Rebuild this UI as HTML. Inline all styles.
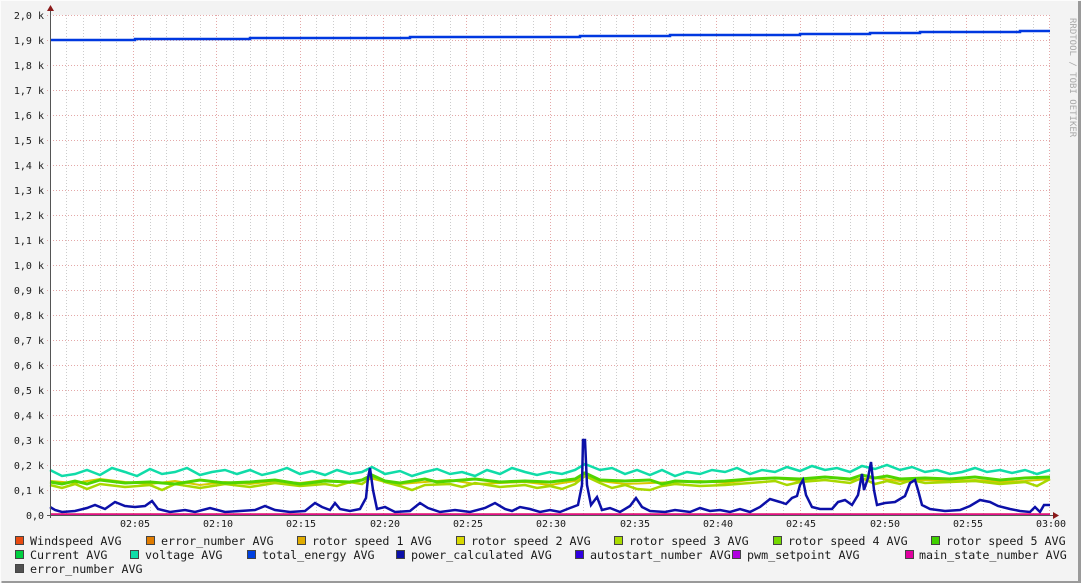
<!DOCTYPE html>
<html><head><meta charset="utf-8"><style>
html,body{margin:0;padding:0;background:#f3f3f3}
svg{display:block}
text{font-family:"DejaVu Sans Mono","Liberation Mono",monospace;fill:#1a1a1a}
.ax{font-size:10px}
.lg{font-size:11.7px}
</style></head><body>
<svg width="1081" height="583" viewBox="0 0 1081 583" xmlns="http://www.w3.org/2000/svg">
<rect x="0" y="0" width="1081" height="583" fill="#f3f3f3"/>
<path d="M0.5 582.5V0.5H1080.5" stroke="#fcfcfc" fill="none"/>
<path d="M1.5 582.5H1079.5V1" stroke="#9a9a9a" stroke-width="3" fill="none"/>
<rect x="50" y="15" width="1000" height="500" fill="#ffffff"/>
<g stroke="#cccccc" stroke-dasharray="1,2">
<line x1="66.5" y1="15" x2="66.5" y2="515"/><line x1="83.5" y1="15" x2="83.5" y2="515"/><line x1="100.5" y1="15" x2="100.5" y2="515"/><line x1="116.5" y1="15" x2="116.5" y2="515"/>
<line x1="150.5" y1="15" x2="150.5" y2="515"/><line x1="166.5" y1="15" x2="166.5" y2="515"/><line x1="183.5" y1="15" x2="183.5" y2="515"/><line x1="200.5" y1="15" x2="200.5" y2="515"/>
<line x1="233.5" y1="15" x2="233.5" y2="515"/><line x1="250.5" y1="15" x2="250.5" y2="515"/><line x1="266.5" y1="15" x2="266.5" y2="515"/><line x1="283.5" y1="15" x2="283.5" y2="515"/>
<line x1="316.5" y1="15" x2="316.5" y2="515"/><line x1="333.5" y1="15" x2="333.5" y2="515"/><line x1="350.5" y1="15" x2="350.5" y2="515"/><line x1="366.5" y1="15" x2="366.5" y2="515"/>
<line x1="400.5" y1="15" x2="400.5" y2="515"/><line x1="416.5" y1="15" x2="416.5" y2="515"/><line x1="433.5" y1="15" x2="433.5" y2="515"/><line x1="450.5" y1="15" x2="450.5" y2="515"/>
<line x1="483.5" y1="15" x2="483.5" y2="515"/><line x1="500.5" y1="15" x2="500.5" y2="515"/><line x1="516.5" y1="15" x2="516.5" y2="515"/><line x1="533.5" y1="15" x2="533.5" y2="515"/>
<line x1="566.5" y1="15" x2="566.5" y2="515"/><line x1="583.5" y1="15" x2="583.5" y2="515"/><line x1="600.5" y1="15" x2="600.5" y2="515"/><line x1="616.5" y1="15" x2="616.5" y2="515"/>
<line x1="650.5" y1="15" x2="650.5" y2="515"/><line x1="666.5" y1="15" x2="666.5" y2="515"/><line x1="683.5" y1="15" x2="683.5" y2="515"/><line x1="700.5" y1="15" x2="700.5" y2="515"/>
<line x1="733.5" y1="15" x2="733.5" y2="515"/><line x1="750.5" y1="15" x2="750.5" y2="515"/><line x1="766.5" y1="15" x2="766.5" y2="515"/><line x1="783.5" y1="15" x2="783.5" y2="515"/>
<line x1="816.5" y1="15" x2="816.5" y2="515"/><line x1="833.5" y1="15" x2="833.5" y2="515"/><line x1="850.5" y1="15" x2="850.5" y2="515"/><line x1="866.5" y1="15" x2="866.5" y2="515"/>
<line x1="900.5" y1="15" x2="900.5" y2="515"/><line x1="916.5" y1="15" x2="916.5" y2="515"/><line x1="933.5" y1="15" x2="933.5" y2="515"/><line x1="950.5" y1="15" x2="950.5" y2="515"/>
<line x1="983.5" y1="15" x2="983.5" y2="515"/><line x1="1000.5" y1="15" x2="1000.5" y2="515"/><line x1="1016.5" y1="15" x2="1016.5" y2="515"/><line x1="1033.5" y1="15" x2="1033.5" y2="515"/>
</g>
<g stroke="#e4a8a8" stroke-dasharray="1,2">
<line x1="133.5" y1="15" x2="133.5" y2="515"/><line x1="216.5" y1="15" x2="216.5" y2="515"/><line x1="300.5" y1="15" x2="300.5" y2="515"/><line x1="383.5" y1="15" x2="383.5" y2="515"/><line x1="466.5" y1="15" x2="466.5" y2="515"/><line x1="550.5" y1="15" x2="550.5" y2="515"/><line x1="633.5" y1="15" x2="633.5" y2="515"/><line x1="716.5" y1="15" x2="716.5" y2="515"/><line x1="800.5" y1="15" x2="800.5" y2="515"/><line x1="883.5" y1="15" x2="883.5" y2="515"/><line x1="966.5" y1="15" x2="966.5" y2="515"/><line x1="1049.5" y1="15" x2="1049.5" y2="515"/>
</g>
<g stroke="#e4a8a8" stroke-dasharray="1,2">
<line x1="47" y1="15.5" x2="1050" y2="15.5"/><line x1="47" y1="40.5" x2="1050" y2="40.5"/><line x1="47" y1="65.5" x2="1050" y2="65.5"/><line x1="47" y1="90.5" x2="1050" y2="90.5"/><line x1="47" y1="115.5" x2="1050" y2="115.5"/><line x1="47" y1="140.5" x2="1050" y2="140.5"/><line x1="47" y1="165.5" x2="1050" y2="165.5"/><line x1="47" y1="190.5" x2="1050" y2="190.5"/><line x1="47" y1="215.5" x2="1050" y2="215.5"/><line x1="47" y1="240.5" x2="1050" y2="240.5"/><line x1="47" y1="265.5" x2="1050" y2="265.5"/><line x1="47" y1="290.5" x2="1050" y2="290.5"/><line x1="47" y1="315.5" x2="1050" y2="315.5"/><line x1="47" y1="340.5" x2="1050" y2="340.5"/><line x1="47" y1="365.5" x2="1050" y2="365.5"/><line x1="47" y1="390.5" x2="1050" y2="390.5"/><line x1="47" y1="415.5" x2="1050" y2="415.5"/><line x1="47" y1="440.5" x2="1050" y2="440.5"/><line x1="47" y1="465.5" x2="1050" y2="465.5"/><line x1="47" y1="490.5" x2="1050" y2="490.5"/>
</g>
<g class="ax" text-anchor="end">
<text x="44" y="19">2,0 k</text><text x="44" y="44">1,9 k</text><text x="44" y="69">1,8 k</text><text x="44" y="94">1,7 k</text><text x="44" y="119">1,6 k</text><text x="44" y="144">1,5 k</text><text x="44" y="169">1,4 k</text><text x="44" y="194">1,3 k</text><text x="44" y="219">1,2 k</text><text x="44" y="244">1,1 k</text><text x="44" y="269">1,0 k</text><text x="44" y="294">0,9 k</text><text x="44" y="319">0,8 k</text><text x="44" y="344">0,7 k</text><text x="44" y="369">0,6 k</text><text x="44" y="394">0,5 k</text><text x="44" y="419">0,4 k</text><text x="44" y="444">0,3 k</text><text x="44" y="469">0,2 k</text><text x="44" y="494">0,1 k</text><text x="44" y="519">0,0</text>
</g>
<g class="ax" text-anchor="middle">
<text x="135" y="527">02:05</text><text x="218" y="527">02:10</text><text x="301" y="527">02:15</text><text x="385" y="527">02:20</text><text x="468" y="527">02:25</text><text x="551" y="527">02:30</text><text x="635" y="527">02:35</text><text x="718" y="527">02:40</text><text x="801" y="527">02:45</text><text x="885" y="527">02:50</text><text x="968" y="527">02:55</text><text x="1051" y="527">03:00</text>
</g>
<text x="1070" y="18" transform="rotate(90 1070 18)" style="font-size:9px;fill:#a8a8a8">RRDTOOL / TOBI OETIKER</text>

<polyline fill="none" stroke="#0038e0" stroke-width="2.5" points="50,40 135,40 135,39 250,39 250,38 410,38 410,37 580,37 580,36 670,36 670,35 800,35 800,34 870,34 870,33 920,33 920,32 1020,32 1020,31 1050,31"/>
<polyline fill="none" stroke="#10dca8" stroke-width="2.5" points="50,470 62,476 75,474 87,470 100,475 112,468 125,472 137,476 150,469 162,474 175,472 187,468 200,475 212,472 225,470 237,474 250,470 262,475 275,472 287,468 300,474 312,471 325,475 337,470 350,474 362,472 372,467 385,474 400,471 412,476 425,472 437,469 450,474 462,472 475,476 487,470 500,474 512,468 525,472 537,475 550,472 562,474 575,470 585,464 600,470 612,468 625,474 637,470 650,475 662,470 675,476 687,472 700,474 712,470 725,472 737,468 750,474 762,470 775,472 787,467 800,471 812,466 825,470 837,468 850,472 862,466 875,469 887,465 900,470 912,467 925,472 937,470 950,474 962,472 975,468 987,472 1000,470 1012,473 1025,470 1037,474 1050,470"/>
<polyline fill="none" stroke="#d8c800" stroke-width="2" points="50,481 75,483 100,479 125,482 150,484 175,481 200,485 225,482 250,484 275,481 300,483 325,480 350,483 370,478 385,482 400,484 425,482 450,480 475,484 500,483 525,482 550,485 575,481 585,476 600,481 625,484 650,483 675,482 700,481 725,483 750,480 775,478 800,481 825,477 850,480 875,478 900,481 925,480 950,481 975,480 1000,482 1025,481 1050,479"/>
<polyline fill="none" stroke="#a8d800" stroke-width="2.5" points="50,485 62,488 75,484 87,489 100,484 125,487 150,485 162,490 175,484 200,488 225,484 250,487 275,483 300,486 325,484 337,486 350,482 362,484 372,477 385,482 400,486 412,490 425,485 450,484 462,487 475,483 500,487 525,485 537,488 550,486 562,489 575,484 585,476 600,483 612,488 625,485 637,489 650,490 662,486 675,484 700,486 725,485 750,483 775,481 787,485 800,482 825,480 850,483 862,478 875,484 887,481 900,484 912,480 925,483 950,482 975,481 1000,484 1025,482 1037,486 1050,479"/>
<polyline fill="none" stroke="#50d400" stroke-width="3" points="50,482 62,484 75,481 87,484 100,480 125,483 150,482 175,484 200,480 225,483 250,482 275,480 300,484 325,481 350,482 362,480 372,475 385,481 400,483 425,479 437,482 450,481 475,479 500,482 525,481 550,482 575,479 585,473 600,480 625,481 650,480 662,484 675,481 700,482 725,481 750,479 775,478 800,479 825,477 850,479 862,475 875,478 887,476 900,479 925,478 950,479 975,477 1000,480 1025,478 1050,477"/>
<polyline fill="none" stroke="#0c10a8" stroke-width="2.5" points="50,507 55,510 62,512 75,511 87,508 95,505 105,509 115,502 125,506 135,507 145,506 152,501 158,509 170,512 185,510 195,512 210,508 225,512 240,511 255,510 265,506 275,510 290,512 305,511 315,503 322,507 330,510 335,503 340,509 350,511 360,509 366,498 368,478 370,468 373,490 377,509 385,507 395,512 410,511 420,503 428,508 440,512 455,510 470,512 485,508 495,503 505,509 512,511 520,507 530,509 540,512 550,510 560,512 570,508 578,505 582,485 583,440 585,440 587,485 591,505 597,497 602,510 610,508 620,512 630,506 636,498 642,507 650,511 665,512 675,510 690,512 700,508 710,511 720,510 730,512 740,509 750,512 760,507 770,499 780,502 786,504 792,498 797,496 800,485 803,480 806,495 812,507 820,509 832,509 838,502 845,500 852,505 858,495 862,474 864,490 868,478 871,462 874,490 877,505 885,503 895,502 905,496 910,483 915,480 918,490 922,505 930,509 945,511 960,510 970,506 980,500 990,502 998,506 1010,509 1020,511 1030,512 1035,507 1040,512 1044,505 1050,505"/>
<polyline fill="none" stroke="#e01010" stroke-width="1.5" points="50,514 1050,514"/>
<polyline fill="none" stroke="#e0108c" stroke-width="2" points="50,514.5 1050,514.5"/>

<line x1="50.5" y1="8" x2="50.5" y2="518" stroke="#555" stroke-width="1"/>
<line x1="47" y1="515.5" x2="1054" y2="515.5" stroke="#555" stroke-width="1"/>
<polygon points="47,11 54,11 50.5,5" fill="#8b1a1a"/>
<polygon points="1053,512 1053,519 1059,515.5" fill="#8b1a1a"/>

<g stroke="#444" stroke-width="1">
<rect x="15.5" y="536.5" width="8" height="8" fill="#e84a10"/>
<rect x="146.5" y="536.5" width="8" height="8" fill="#e07c00"/>
<rect x="297.5" y="536.5" width="8" height="8" fill="#e0ac00"/>
<rect x="456.5" y="536.5" width="8" height="8" fill="#d8d800"/>
<rect x="614.5" y="536.5" width="8" height="8" fill="#aadc00"/>
<rect x="773.5" y="536.5" width="8" height="8" fill="#74d800"/>
<rect x="931.5" y="536.5" width="8" height="8" fill="#40d000"/>
<rect x="15.5" y="550.5" width="8" height="8" fill="#00d040"/>
<rect x="130.5" y="550.5" width="8" height="8" fill="#10dca8"/>
<rect x="247.5" y="550.5" width="8" height="8" fill="#0040e0"/>
<rect x="396.5" y="550.5" width="8" height="8" fill="#0c10a8"/>
<rect x="575.5" y="550.5" width="8" height="8" fill="#3000e0"/>
<rect x="732.5" y="550.5" width="8" height="8" fill="#b000e0"/>
<rect x="905.5" y="550.5" width="8" height="8" fill="#e000a0"/>
<rect x="15.5" y="564.5" width="8" height="8" fill="#505050"/>
</g>
<g class="lg">
<text x="30" y="545">Windspeed AVG</text>
<text x="161" y="545">error_number AVG</text>
<text x="312" y="545">rotor speed 1 AVG</text>
<text x="471" y="545">rotor speed 2 AVG</text>
<text x="629" y="545">rotor speed 3 AVG</text>
<text x="788" y="545">rotor speed 4 AVG</text>
<text x="946" y="545">rotor speed 5 AVG</text>
<text x="30" y="559">Current AVG</text>
<text x="145" y="559">voltage AVG</text>
<text x="262" y="559">total_energy AVG</text>
<text x="411" y="559">power_calculated AVG</text>
<text x="590" y="559">autostart_number AVG</text>
<text x="747" y="559">pwm_setpoint AVG</text>
<text x="919" y="559">main_state_number AVG</text>
<text x="30" y="573">error_number AVG</text>
</g>
</svg>
</body></html>
